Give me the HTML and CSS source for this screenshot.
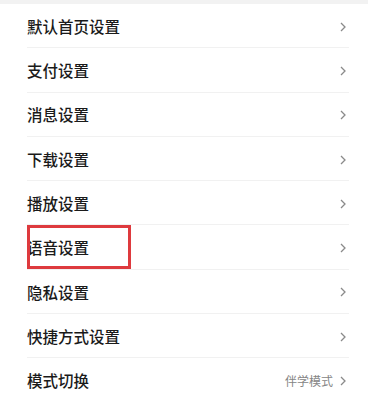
FILE: index.html
```html
<!DOCTYPE html>
<html lang="zh-CN">
<head>
<meta charset="utf-8">
<link rel="stylesheet" href="styles.css">
</head>
<body>
<div class="topband"></div>
<ul class="list">
  <li class="row"><span class="label">默认首页设置</span><span class="right"><svg class="chev" viewBox="0 0 6 10"><path d="M1 1 L5 5 L1 9"/></svg></span></li>
  <li class="row"><span class="label">支付设置</span><span class="right"><svg class="chev" viewBox="0 0 6 10"><path d="M1 1 L5 5 L1 9"/></svg></span></li>
  <li class="row"><span class="label">消息设置</span><span class="right"><svg class="chev" viewBox="0 0 6 10"><path d="M1 1 L5 5 L1 9"/></svg></span></li>
  <li class="row"><span class="label">下载设置</span><span class="right"><svg class="chev" viewBox="0 0 6 10"><path d="M1 1 L5 5 L1 9"/></svg></span></li>
  <li class="row"><span class="label">播放设置</span><span class="right"><svg class="chev" viewBox="0 0 6 10"><path d="M1 1 L5 5 L1 9"/></svg></span></li>
  <li class="row highlighted"><span class="label">语音设置</span><span class="right"><svg class="chev" viewBox="0 0 6 10"><path d="M1 1 L5 5 L1 9"/></svg></span><span class="mark"></span></li>
  <li class="row"><span class="label">隐私设置</span><span class="right"><svg class="chev" viewBox="0 0 6 10"><path d="M1 1 L5 5 L1 9"/></svg></span></li>
  <li class="row"><span class="label">快捷方式设置</span><span class="right"><svg class="chev" viewBox="0 0 6 10"><path d="M1 1 L5 5 L1 9"/></svg></span></li>
  <li class="row last"><span class="label">模式切换</span><span class="right"><span class="value">伴学模式</span><svg class="chev" viewBox="0 0 6 10"><path d="M1 1 L5 5 L1 9"/></svg></span></li>
</ul>
</body>
</html>
```
FILE: styles.css
```css
html, body {
  margin: 0;
  padding: 0;
  background: #ffffff;
  font-family: "Noto Sans CJK SC", "Noto Sans", sans-serif;
}
.topband {
  height: 4px;
  background: #f2f2f2;
}
.list {
  list-style: none;
  margin: 0;
  padding: 0 19px 0 27px;
}
.row {
  position: relative;
  box-sizing: content-box;
  height: 41.3px;
  padding-top: 2px;
  border-bottom: 1px solid #f1f1f1;
  display: flex;
  align-items: center;
  justify-content: space-between;
}
.label {
  font-size: 15.5px;
  font-weight: 500;
  color: #1a1a1a;
  line-height: 1;
}
.right {
  display: flex;
  align-items: center;
  gap: 7px;
  padding-right: 3px;
}
.value {
  font-size: 12px;
  color: #858585;
  line-height: 1;
}
.chev {
  width: 6px;
  height: 10px;
  fill: none;
  stroke: #8a8a8a;
  stroke-width: 1.3;
}
.mark {
  position: absolute;
  left: 0;
  top: 0;
  width: 104px;
  height: 44px;
  box-sizing: border-box;
  border: 3px solid #de3a3e;
}
```
